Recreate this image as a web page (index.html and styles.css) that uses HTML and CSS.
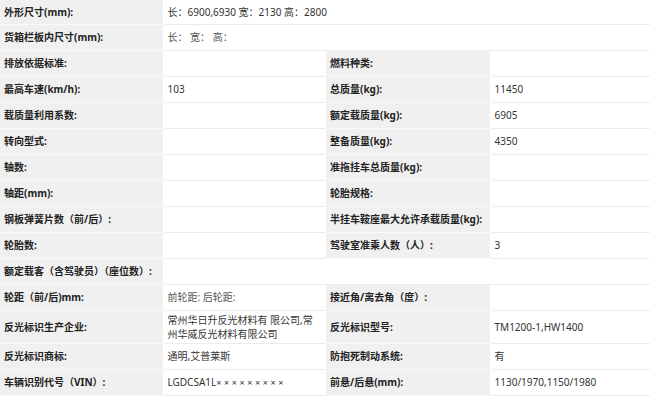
FILE: index.html
```
<!DOCTYPE html>
<html lang="zh-CN">
<head>
<meta charset="utf-8">
<title>车辆参数</title>
<link rel="stylesheet" href="styles.css">
</head>
<body>
<table class="spec">
  <colgroup>
    <col class="c1"><col class="c2"><col class="c3"><col class="c4">
  </colgroup>
  <tbody>
    <tr class="first"><td class="lb">外形尺寸(mm):</td><td class="val" colspan="3">长：6900,6930 宽：2130 高：2800</td></tr>
    <tr><td class="lb">货箱栏板内尺寸(mm):</td><td class="val dim" colspan="3">长：&nbsp;宽：&nbsp;高：</td></tr>
    <tr><td class="lb">排放依据标准:</td><td class="val"></td><td class="lb">燃料种类:</td><td class="val"></td></tr>
    <tr><td class="lb">最高车速(km/h):</td><td class="val">103</td><td class="lb">总质量(kg):</td><td class="val">11450</td></tr>
    <tr><td class="lb">载质量利用系数:</td><td class="val"></td><td class="lb">额定载质量(kg):</td><td class="val">6905</td></tr>
    <tr><td class="lb">转向型式:</td><td class="val"></td><td class="lb">整备质量(kg):</td><td class="val">4350</td></tr>
    <tr><td class="lb">轴数:</td><td class="val"></td><td class="lb">准拖挂车总质量(kg):</td><td class="val"></td></tr>
    <tr><td class="lb">轴距(mm):</td><td class="val"></td><td class="lb">轮胎规格:</td><td class="val"></td></tr>
    <tr><td class="lb">钢板弹簧片数（前/后）:</td><td class="val"></td><td class="lb">半挂车鞍座最大允许承载质量(kg):</td><td class="val"></td></tr>
    <tr><td class="lb">轮胎数:</td><td class="val"></td><td class="lb">驾驶室准乘人数（人）:</td><td class="val">3</td></tr>
    <tr><td class="lb">额定载客（含驾驶员）（座位数）:</td><td class="val" colspan="3"></td></tr>
    <tr><td class="lb">轮距（前/后)mm:</td><td class="val dim">前轮距: 后轮距:</td><td class="lb">接近角/离去角（度）:</td><td class="val"></td></tr>
    <tr><td class="lb">反光标识生产企业:</td><td class="val">常州华日升反光材料有 限公司,常州华威反光材料有限公司</td><td class="lb">反光标识型号:</td><td class="val">TM1200-1,HW1400</td></tr>
    <tr><td class="lb">反光标识商标:</td><td class="val">通明,艾普莱斯</td><td class="lb">防抱死制动系统:</td><td class="val">有</td></tr>
    <tr><td class="lb">车辆识别代号（VIN）:</td><td class="val">LGDCSA1L<span class="mask">×××××××××</span></td><td class="lb">前悬/后悬(mm):</td><td class="val">1130/1970,1150/1980</td></tr>
  </tbody>
</table>
</body>
</html>
```
FILE: styles.css
```
html, body {
  margin: 0;
  padding: 0;
  background: #ffffff;
}
body {
  font-family: "Noto Sans", "Noto Sans CJK SC", sans-serif;
  font-size: 10px;
  line-height: 14px;
}
.spec {
  width: 650px;
  table-layout: fixed;
  border-collapse: collapse;
}
.c1 { width: 163px; }
.c2 { width: 163px; }
.c3 { width: 164px; }
.c4 { width: 160px; }
.spec td {
  height: 26px;
  box-sizing: border-box;
  padding: 2px 4px;
  vertical-align: middle;
  word-break: break-all;
}
.spec .first td {
  height: 24px;
}
.lb {
  background: #f0f0f0;
  color: #222222;
  font-weight: bold;
  border-bottom: 1px solid #fafafa;
  border-right: 1px solid #ffffff;
}
.val {
  background: #ffffff;
  color: #333333;
  border-bottom: 1px solid #ececec;
}
.dim {
  color: #555555;
}
.mask {
  font-family: "Noto Sans", sans-serif;
  font-size: 9px;
  letter-spacing: 2.6px;
}
```
